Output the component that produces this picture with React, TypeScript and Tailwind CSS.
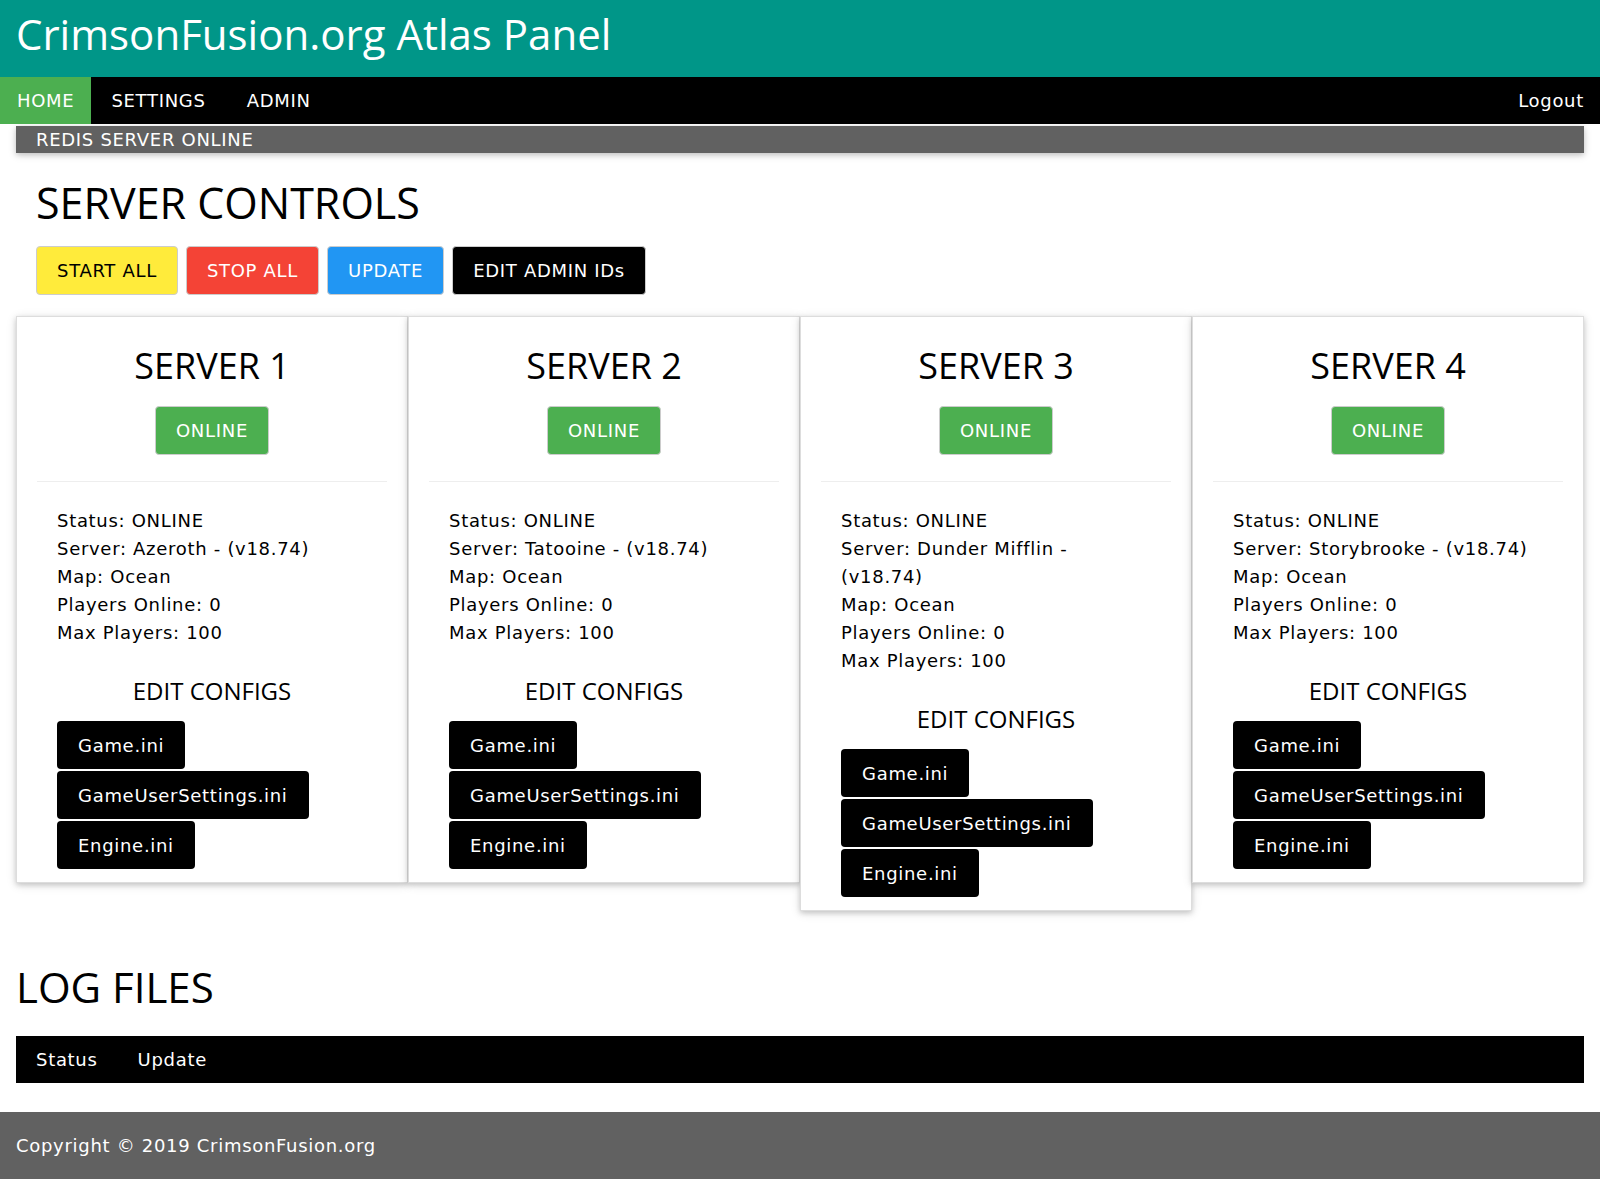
import React from "react";

const servers = [
  { id: 1, name: "Azeroth" },
  { id: 2, name: "Tatooine" },
  { id: 3, name: "Dunder Mifflin" },
  { id: 4, name: "Storybrooke" },
];

const configs = ["Game.ini", "GameUserSettings.ini", "Engine.ini"];

const heading = "font-['Open_Sans',Arial,sans-serif] font-normal leading-none tracking-normal";

function ServerCard({ id, name }: { id: number; name: string }) {
  return (
    <div className="border border-[#ddd] bg-white px-5 pt-[31px] pb-[13px] shadow-[0_2px_5px_0_rgba(0,0,0,0.16),0_2px_10px_0_rgba(0,0,0,0.12)]">
      <h2 className={`${heading} text-center text-[36px]`}>SERVER {id}</h2>
      <div className="mt-[22px] flex justify-center">
        <button className="h-[49px] rounded-[4px] border border-[#ccc] bg-[#4CAF50] px-5 text-white">
          ONLINE
        </button>
      </div>
      <hr className="mt-[26px] border-t border-[#eee]" />
      <div className="mt-[25px] px-5 leading-[28px]">
        <p>Status: ONLINE</p>
        <p>Server: {name} - (v18.74)</p>
        <p>Map: Ocean</p>
        <p>Players Online: 0</p>
        <p>Max Players: 100</p>
      </div>
      <h3 className={`${heading} mt-[32px] text-center text-[24px]`}>EDIT CONFIGS</h3>
      <div className="mt-[18px] flex flex-col items-start gap-[2px] px-5">
        {configs.map((c) => (
          <button key={c} className="h-[48px] rounded-[4px] bg-black px-[21px] text-white">
            {c}
          </button>
        ))}
      </div>
    </div>
  );
}

export default function App() {
  return (
    <div className="min-h-[1184px] bg-white font-['DejaVu_Sans',Verdana,sans-serif] text-[18px] leading-[27px] tracking-[0.7px] text-black">
      <header className="flex h-[77px] items-center bg-[#009688] px-4 pb-[9px]">
        <h1 className={`${heading} text-[42px] text-white`}>CrimsonFusion.org Atlas Panel</h1>
      </header>

      <nav className="flex h-[47px] items-center bg-black text-white">
        <a className="flex h-full items-center bg-[#4CAF50] px-[17px]">HOME</a>
        <a className="flex h-full items-center px-[20px]">SETTINGS</a>
        <a className="flex h-full items-center px-[21px]">ADMIN</a>
        <a className="ml-auto flex h-full items-center px-4">Logout</a>
      </nav>

      <div className="mx-4 mt-[2px] h-[27px] bg-[#616161] px-5 text-white shadow-[0_2px_5px_0_rgba(0,0,0,0.16),0_2px_10px_0_rgba(0,0,0,0.12)]">
        REDIS SERVER ONLINE
      </div>

      <section className="px-9 pt-[28px]">
        <h2 className={`${heading} text-[43px]`}>SERVER CONTROLS</h2>
        <div className="mt-[22px] flex gap-2">
          <button className="h-[49px] rounded-[4px] border border-[#ccc] bg-[#ffeb3b] px-5 text-black">
            START ALL
          </button>
          <button className="h-[49px] rounded-[4px] border border-[#ccc] bg-[#f44336] px-5 text-white">
            STOP ALL
          </button>
          <button className="h-[49px] rounded-[4px] border border-[#ccc] bg-[#2196F3] px-5 text-white">
            UPDATE
          </button>
          <button className="h-[49px] rounded-[4px] border border-[#ccc] bg-black px-5 text-white">
            EDIT ADMIN IDs
          </button>
        </div>
      </section>

      <div className="mx-4 mt-[21px] grid grid-cols-4 items-start">
        {servers.map((s) => (
          <ServerCard key={s.id} id={s.id} name={s.name} />
        ))}
      </div>

      <h2 className={`${heading} mx-4 mt-[55px] text-[42px]`}>LOG FILES</h2>
      <div className="mx-4 mt-[28px] flex h-[47px] items-center bg-black text-white">
        <a className="px-5">Status</a>
        <a className="px-5">Update</a>
      </div>

      <footer className="mt-[29px] flex h-[67px] items-center bg-[#616161] px-4 text-white">
        Copyright © 2019 CrimsonFusion.org
      </footer>
    </div>
  );
}
